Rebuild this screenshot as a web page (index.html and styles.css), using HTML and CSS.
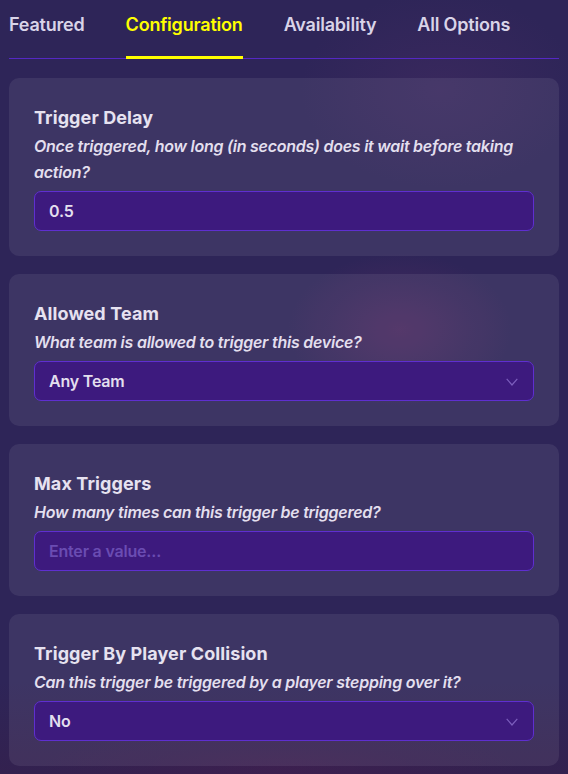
FILE: index.html
```html
<!DOCTYPE html>
<html lang="en">
<head>
<meta charset="utf-8">
<title>Trigger Configuration</title>
<link rel="stylesheet" href="styles.css">
</head>
<body>
<div class="page">
  <nav class="tabs">
    <div class="tab">Featured</div>
    <div class="tab active">Configuration</div>
    <div class="tab">Availability</div>
    <div class="tab">All Options</div>
  </nav>
  <div class="cards">
    <section class="card">
      <h2 class="title">Trigger Delay</h2>
      <p class="desc">Once triggered, how long (in seconds) does it wait before taking action?</p>
      <div class="field"><span class="value">0.5</span></div>
    </section>
    <section class="card">
      <h2 class="title">Allowed Team</h2>
      <p class="desc">What team is allowed to trigger this device?</p>
      <div class="field select"><span class="value">Any Team</span>
        <svg class="chev" width="12" height="8" viewBox="0 0 12 8"><path d="M0.7 0.8 L6 7 L11.3 0.8" fill="none" stroke="currentColor" stroke-width="1.2"/></svg>
      </div>
    </section>
    <section class="card">
      <h2 class="title">Max Triggers</h2>
      <p class="desc">How many times can this trigger be triggered?</p>
      <div class="field"><span class="placeholder">Enter a value...</span></div>
    </section>
    <section class="card">
      <h2 class="title">Trigger By Player Collision</h2>
      <p class="desc">Can this trigger be triggered by a player stepping over it?</p>
      <div class="field select"><span class="value">No</span>
        <svg class="chev" width="12" height="8" viewBox="0 0 12 8"><path d="M0.7 0.8 L6 7 L11.3 0.8" fill="none" stroke="currentColor" stroke-width="1.2"/></svg>
      </div>
    </section>
  </div>
</div>
</body>
</html>
```
FILE: styles.css
```css
* { box-sizing: border-box; }
html, body { margin: 0; padding: 0; }
body {
  width: 568px;
  height: 774px;
  overflow: hidden;
  font-family: Inter, "Noto Sans", sans-serif;
  color: #e3dfee;
  background:
    radial-gradient(ellipse 160px 110px at 400px 330px, rgba(120, 50, 110, 0.35), transparent 70%),
    radial-gradient(ellipse 200px 140px at 440px 90px, rgba(90, 50, 110, 0.25), transparent 70%),
    radial-gradient(ellipse 300px 60px at 280px 770px, rgba(70, 30, 80, 0.5), transparent 80%),
    linear-gradient(180deg, #2e2558 0%, #2e2558 88%, #33214f 100%);
}
.page { padding: 0 9px; }
.tabs {
  display: flex;
  gap: 41px;
  border-bottom: 1px solid #5528c4;
  height: 59px;
}
.tab {
  font-size: 18px;
  font-weight: 600;
  color: #d9d4e8;
  padding-top: 13px;
  line-height: 24px;
  height: 59px;
  letter-spacing: -0.2px;
}
.tab.active {
  color: #ffff00;
  border-bottom: 3px solid #ffff00;
}
.cards {
  display: flex;
  flex-direction: column;
  gap: 18px;
  padding-top: 19px;
}
.card {
  background: rgba(255, 255, 255, 0.075);
  border-radius: 10px;
  padding: 28px 25px 25px;
}
.title {
  margin: 0 0 3px;
  font-size: 18px;
  font-weight: 700;
  line-height: 24px;
  color: #e6e2f0;
  letter-spacing: 0.1px;
}
.desc {
  margin: 0 0 6px;
  font-size: 16px;
  font-weight: 600;
  font-style: italic;
  line-height: 26px;
  color: #e3dfee;
  letter-spacing: -0.25px;
}
.field {
  height: 40px;
  border: 1px solid #5f2fd0;
  border-radius: 7px;
  background: #3d1a7e;
  display: flex;
  align-items: center;
  justify-content: space-between;
  padding: 0 15px 0 14px;
  font-size: 16px;
  font-weight: 600;
}
.value { color: #e3dfee; letter-spacing: -0.2px; }
.placeholder { color: #6a4cb2; letter-spacing: -0.2px; }
.chev { color: #7c5fbd; margin-top: 1px; }
```
